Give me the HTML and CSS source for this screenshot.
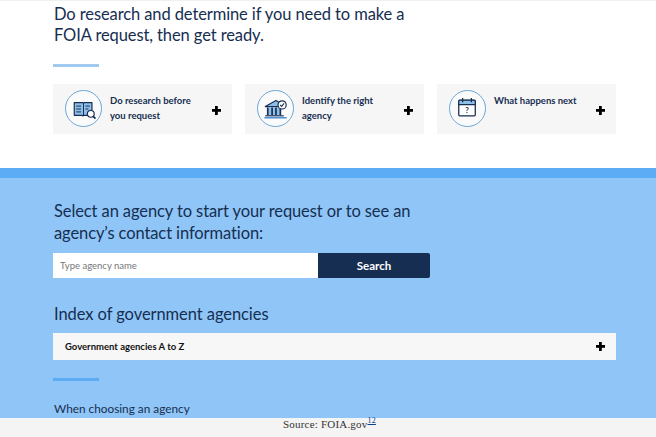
FILE: index.html
```html
<!DOCTYPE html>
<html lang="en">
<head>
<meta charset="utf-8">
<title>FOIA.gov</title>
<link rel="stylesheet" href="styles.css">
</head>
<body>
<div class="page">
  <section class="top">
    <h2 class="lead">Do research and determine if you need to make a<br>FOIA request, then get ready.</h2>
    <div class="rule rule-light"></div>
    <div class="cards">
      <div class="card">
        <span class="circle">
          <svg viewBox="0 0 36 36" width="36" height="36">
            <path d="M8.500 11.500h8.800l.7.700.7-.7h8v7.500l-3 1-1 4.500H18l-.7.700-.7-.7H8.500z" fill="#8fbfe8" stroke="#162e51" stroke-width="1.200" stroke-linejoin="round"/>
            <path d="M18 12v12.500" stroke="#162e51" stroke-width="1"/>
            <path d="M10.500 15h5M10.500 18h5M10.500 21h5M20 15h4.500M20 18h3" stroke="#162e51" stroke-width="1"/>
            <circle cx="25.500" cy="23" r="3.500" fill="#fff" stroke="#162e51" stroke-width="1.200"/>
            <path d="M28 25.500l2.300 2.300" stroke="#162e51" stroke-width="1.800"/>
          </svg>
        </span>
        <span class="card-text">Do research before<br>you request</span>
        <span class="plus"></span>
      </div>
      <div class="card">
        <span class="circle">
          <svg viewBox="0 0 36 36" width="36" height="36">
            <path d="M7.500 15.500L18.500 9.200l5.500 3.300v3z" fill="#8fbfe8" stroke="#162e51" stroke-width="1.200" stroke-linejoin="round"/>
            <path d="M9.500 16.500h14v8h-14z" fill="#8fbfe8"/>
            <path d="M10 16.500v8M14.500 16.500v8M18.500 16.500v8M23 17.500v7" stroke="#162e51" stroke-width="1.700"/>
            <path d="M7.500 25h19" stroke="#162e51" stroke-width="1.200"/>
            <path d="M6.500 27h23" stroke="#4f93d6" stroke-width="1.600"/>
            <circle cx="24.800" cy="13.800" r="4.200" fill="#fff" stroke="#162e51" stroke-width="1.200"/>
            <path d="M22.800 13.800l1.500 1.500 2.500-3" fill="none" stroke="#162e51" stroke-width="1.100"/>
          </svg>
        </span>
        <span class="card-text">Identify the right<br>agency</span>
        <span class="plus"></span>
      </div>
      <div class="card">
        <span class="circle">
          <svg viewBox="0 0 36 36" width="36" height="36">
            <rect x="9" y="9" width="17" height="16" rx="1" fill="#fff" stroke="#162e51" stroke-width="1.300"/>
            <path d="M9 10a1 1 0 0 1 1-1h15a1 1 0 0 1 1 1v3.500H9z" fill="#8fbfe8" stroke="#162e51" stroke-width="1.200"/>
            <path d="M13 6.800v4.200M22 6.800v4.200" stroke="#162e51" stroke-width="1.300"/>
            <text x="17.500" y="22" class="cal-q">?</text>
          </svg>
        </span>
        <span class="card-text card-text-top">What happens next</span>
        <span class="plus"></span>
      </div>
    </div>
  </section>
  <section class="agency">
    <h2 class="lead lead-select">Select an agency to start your request or to see an<br>agency’s contact information:</h2>
    <div class="search">
      <div class="search-input">Type agency name</div>
      <div class="search-btn">Search</div>
    </div>
    <h3 class="index-title">Index of government agencies</h3>
    <div class="accordion">
      <span>Government agencies A to Z</span>
      <span class="plus"></span>
    </div>
    <div class="rule rule-dark"></div>
    <p class="choosing">When choosing an agency</p>
  </section>
  <footer class="source">Source: FOIA.gov<sup class="ref">12</sup></footer>
</div>
</body>
</html>
```
FILE: styles.css
```css
* { box-sizing: border-box; }
html, body { margin: 0; padding: 0; }
body { width: 656px; height: 437px; overflow: hidden; background: #fff; font-family: Lato, sans-serif; color: #162e51; }
.page { display: flex; flex-direction: column; height: 437px; overflow: hidden; }
.top { height: 168px; padding: 3px 40px 0 54px; border-top: 1px solid #f0f0f0; flex: none; }
.lead { margin: 0; font-size: 16.500px; line-height: 21px; font-weight: 400; letter-spacing: -0.1px; white-space: nowrap; }
.lead-select { line-height: 22px; }
.rule { width: 46px; height: 3px; }
.rule-light { margin-top: 18px; margin-left: -1px; background: #9fcbf0; }
.rule-dark { margin-top: 18px; margin-left: -1px; background: #5cabf3; }
.cards { display: flex; gap: 13px; margin-top: 17px; margin-left: -1px; }
.card { width: 179px; height: 50px; background: #f6f6f6; display: flex; align-items: center; padding: 0 11px 0 12px; }
.circle { width: 37px; height: 37px; margin-top: -1px; border: 1px solid #6ba6d8; border-radius: 50%; background: #fbfbfb; flex: none; display: flex; align-items: center; justify-content: center; }
.card-text { font-size: 9.500px; line-height: 15px; font-weight: 700; flex: 1; margin: -2px 0 0 8px; white-space: nowrap; }
.card-text-top { align-self: flex-start; margin-top: 9px; }
.plus { width: 9px; height: 9px; flex: none; margin-top: 3px; background: linear-gradient(#000, #000) center / 100% 2.800px no-repeat, linear-gradient(#000, #000) center / 2.800px 100% no-repeat; }
.cal-q { font-family: Lato, sans-serif; font-size: 8px; font-weight: 700; fill: #162e51; text-anchor: middle; }
.agency { flex: 1; min-height: 0; background: #90c6f7; border-top: 10px solid #5cacf5; padding: 22px 40px 0 54px; }
.search { display: flex; width: 377px; height: 25px; margin-top: 9px; margin-left: -1px; }
.search-input { width: 265px; background: #fff; color: #777; font-size: 9.500px; line-height: 25px; padding-left: 7px; }
.search-btn { flex: 1; background: #162e51; color: #fff; font-size: 11.500px; font-weight: 700; line-height: 25px; text-align: center; border-radius: 0 2px 2px 0; }
.index-title { margin: 24px 0 0; font-size: 16.500px; line-height: 24px; font-weight: 400; letter-spacing: -0.07px; }
.accordion { display: flex; align-items: center; justify-content: space-between; width: 563px; height: 27px; margin-top: 7px; margin-left: -1px; background: #f7f7f7; padding: 0 11px 0 12px; color: #111; font-size: 9.500px; font-weight: 700; }
.accordion .plus { margin-top: 0; }
.choosing { margin: 20px 0 0; font-size: 11.800px; line-height: 16px; }
.source { flex: none; height: 19px; background: #f4f4f4; color: #333; font-family: "Liberation Serif", serif; font-size: 11px; line-height: 12px; padding-left: 283px; letter-spacing: 0.2px; }
.ref { font-size: 8px; line-height: 0; color: #0b3d91; text-decoration: underline; }
```
